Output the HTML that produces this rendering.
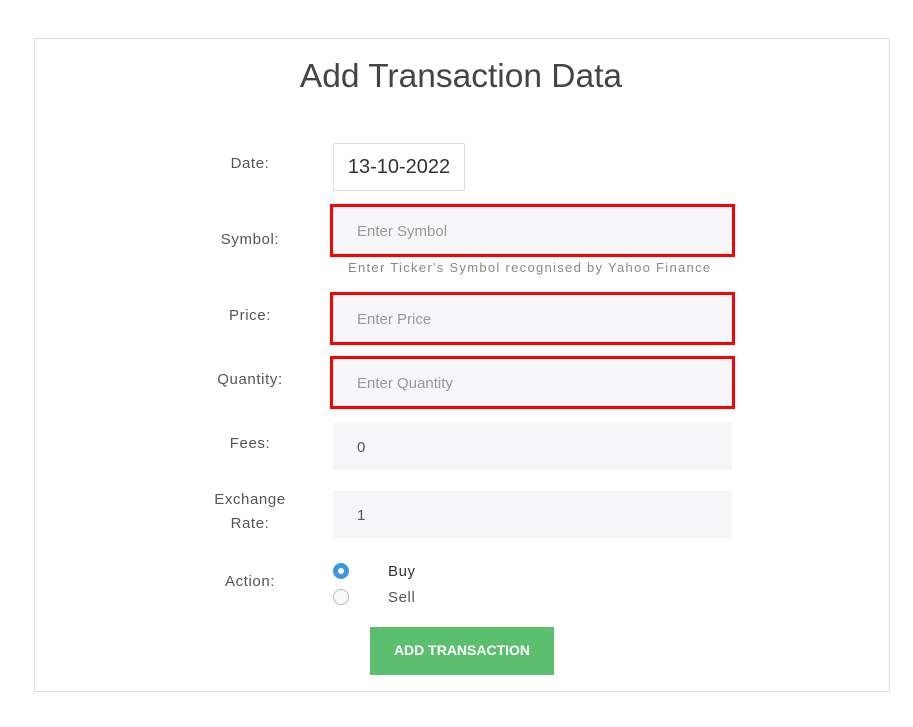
<!DOCTYPE html>
<html><head><style>
body{margin:0;width:913px;height:727px;background:#fff;font-family:"Liberation Sans",sans-serif;position:relative;overflow:hidden}
.a{position:absolute}
.card{left:34px;top:38px;width:854px;height:652px;border:1px solid #ddd}
.lbl{color:#555;font-size:15px;letter-spacing:0.6px;text-align:center;width:120px}
.inp{background:#f6f6f8;left:333px;width:399px;height:47px;box-sizing:border-box;color:#999;font-size:15px;padding-left:24px;line-height:49px}
.red{border:3px solid #f00;left:330px;width:405px;height:53px;line-height:49px;padding-left:24px}
</style></head><body>
<div class="a card"></div>
<div class="a" style="left:0;width:922px;top:58px;text-align:center;font-size:33.5px;color:#444">Add Transaction Data</div>
<div class="a lbl" style="left:190px;top:155px">Date:</div>
<div class="a" style="left:333px;top:143px;width:132px;height:48px;box-sizing:border-box;border:1px solid #ddd;border-radius:2px;font-size:20px;color:#333;line-height:46px;text-align:center">13-10-2022</div>
<div class="a lbl" style="left:190px;top:231px">Symbol:</div>
<div class="a inp red" style="top:204px">Enter Symbol</div>
<div class="a" style="left:348px;top:260px;font-size:13px;color:#888;letter-spacing:1.3px">Enter Ticker's Symbol recognised by Yahoo Finance</div>
<div class="a lbl" style="left:190px;top:307px">Price:</div>
<div class="a inp red" style="top:292px">Enter Price</div>
<div class="a lbl" style="left:190px;top:371px">Quantity:</div>
<div class="a inp red" style="top:356px">Enter Quantity</div>
<div class="a lbl" style="left:190px;top:435px">Fees:</div>
<div class="a inp" style="top:423px;color:#555">0</div>
<div class="a lbl" style="left:190px;top:488px;line-height:24px">Exchange<br>Rate:</div>
<div class="a inp" style="top:491px;color:#555">1</div>
<div class="a lbl" style="left:190px;top:573px">Action:</div>
<div class="a" style="left:333px;top:563px;width:16px;height:16px;border-radius:50%;background:#3a9ad9"><div class="a" style="left:5px;top:5px;width:6px;height:6px;border-radius:50%;background:#fff"></div></div>
<div class="a" style="left:333px;top:589px;width:14px;height:14px;border-radius:50%;border:1px solid #bbb;background:#fafafa"></div>
<div class="a" style="left:388px;top:563px;font-size:15px;color:#333;letter-spacing:0.6px">Buy</div>
<div class="a" style="left:388px;top:589px;font-size:15px;color:#555;letter-spacing:0.6px">Sell</div>
<div class="a" style="left:370px;top:627px;width:184px;height:48px;background:#5cbf6f;color:#fff;font-size:14px;font-weight:bold;text-align:center;line-height:46px">ADD TRANSACTION</div>
</body></html>
